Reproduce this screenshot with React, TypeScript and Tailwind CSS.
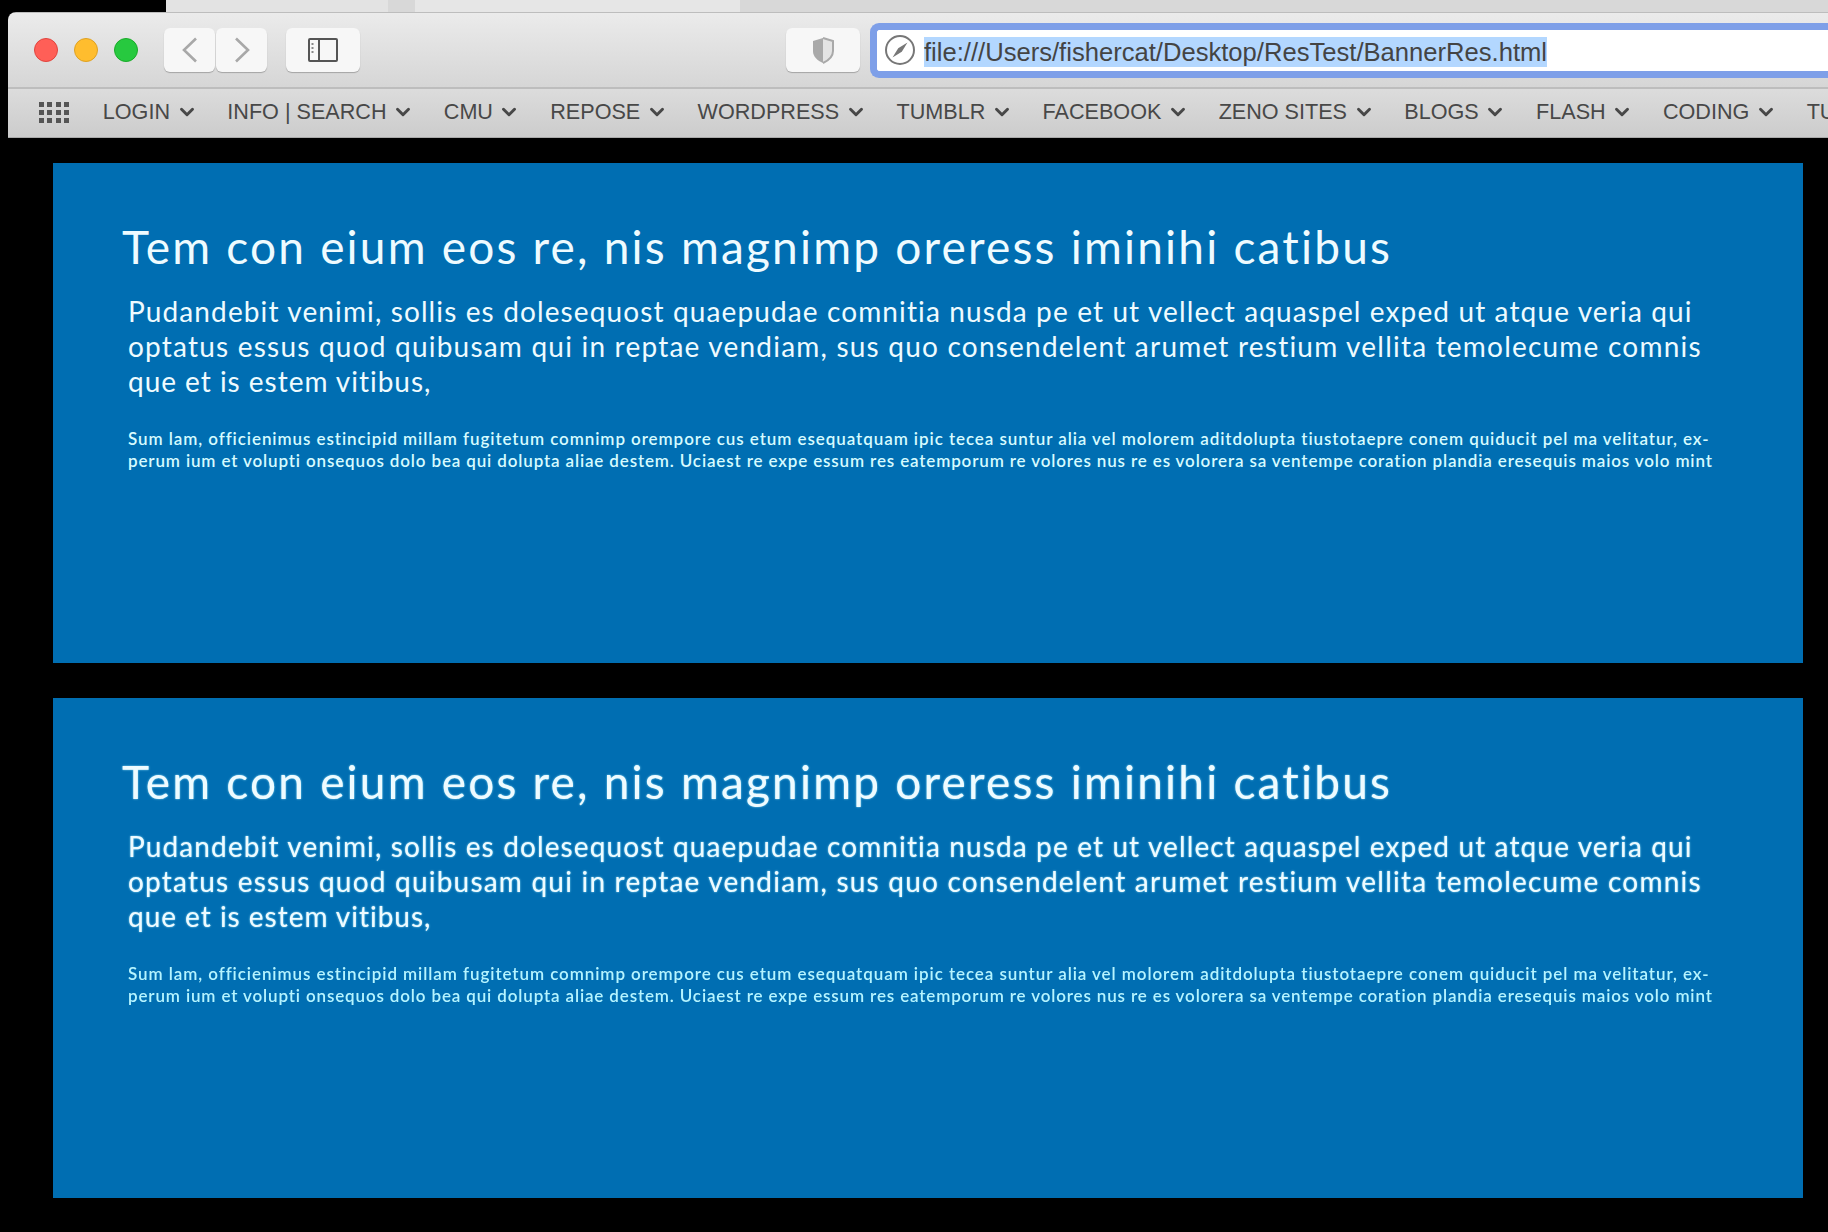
import { ChevronDown } from 'lucide-react';

const bookmarks = ['LOGIN', 'INFO | SEARCH', 'CMU', 'REPOSE', 'WORDPRESS', 'TUMBLR', 'FACEBOOK', 'ZENO SITES', 'BLOGS', 'FLASH', 'CODING'];

function Banner({ blurry }: { blurry?: boolean }) {
  const soft = blurry ? 'blur-[0.5px] [text-shadow:0_0_2px_#9fe9ff]' : '';
  return (
    <section className="h-[500px] w-[1750px] overflow-hidden bg-[#006eb2] pl-[69px] pt-[59px] font-['Lato',sans-serif] text-[#eefbff]">
      <h1 className={`whitespace-nowrap text-[46px] leading-[50px] font-normal tracking-[2.2px] ${soft}`}>Tem con eium eos re, nis magnimp oreress iminihi catibus</h1>
      <div className={`mt-[22px] ml-[6px] whitespace-nowrap text-[28px] leading-[35px] ${soft}`}>
        <p className="tracking-[1.12px]">Pudandebit venimi, sollis es dolesequost quaepudae comnitia nusda pe et ut vellect aquaspel exped ut atque veria qui</p>
        <p className="tracking-[1.21px]">optatus essus quod quibusam qui in reptae vendiam, sus quo consendelent arumet restium vellita temolecume comnis</p>
        <p className="tracking-[0.97px]">que et is estem vitibus,</p>
      </div>
      <div className={`mt-[29px] ml-[6px] whitespace-nowrap text-[17px] leading-[22px] font-semibold ${blurry ? 'blur-[0.5px] text-[#b5f4ff]' : 'text-[#d6fbff]'}`}>
        <p className="tracking-[0.925px]">Sum lam, officienimus estincipid millam fugitetum comnimp orempore cus etum esequatquam ipic tecea suntur alia vel molorem aditdolupta tiustotaepre conem quiducit pel ma velitatur, ex-</p>
        <p className="tracking-[0.855px]">perum ium et volupti onsequos dolo bea qui dolupta aliae destem. Uciaest re expe essum res eatemporum re volores nus re es volorera sa ventempe coration plandia eresequis maios volo mint</p>
      </div>
    </section>
  );
}

function ToolButton({ width, children }: { width: string; children: React.ReactNode }) {
  return <div className={`grid h-[44px] place-items-center rounded-[6px] bg-[#f7f7f7] shadow-[0_1px_1px_rgba(0,0,0,0.25)] ${width}`}>{children}</div>;
}

export default function App() {
  return (
    <div className="h-[1232px] w-[1828px] overflow-hidden bg-black font-['Liberation_Sans',sans-serif]">
      <div className="flex h-3 pl-[166px]">
        <div className="w-[222px] bg-[#e3e3e3]" />
        <div className="w-[27px] bg-[#d8d8d8]" />
        <div className="w-[325px] bg-[#e6e6e6]" />
        <div className="flex-1 bg-[#d8d8d8]" />
      </div>
      <div className="ml-2 overflow-hidden rounded-tl-[8px]">
        <div className="flex h-[75px] items-center border-t border-[#bdbdbd] bg-gradient-to-b from-[#ebebeb] to-[#d6d6d6] pl-[26px]">
          <div className="flex gap-[16px]">
            <span className="h-6 w-6 rounded-full border border-[#e0443e] bg-[#ff5f57]" />
            <span className="h-6 w-6 rounded-full border border-[#dea123] bg-[#ffbd2e]" />
            <span className="h-6 w-6 rounded-full border border-[#1aab29] bg-[#27c93f]" />
          </div>
          <div className="ml-[26px] flex gap-[1px]">
            <ToolButton width="w-[51px]">
              <svg width="16" height="26" viewBox="0 0 16 26" fill="none" stroke="#a8a8a8" strokeWidth="2.6">
                <path d="M14 1.500 2 13l12 11.500" />
              </svg>
            </ToolButton>
            <ToolButton width="w-[51px]">
              <svg width="16" height="26" viewBox="0 0 16 26" fill="none" stroke="#a8a8a8" strokeWidth="2.6">
                <path d="M2 1.500 14 13 2 24.500" />
              </svg>
            </ToolButton>
          </div>
          <div className="ml-[19px]">
            <ToolButton width="w-[74px]">
              <svg width="30" height="24" viewBox="0 0 30 24" fill="none" stroke="#555" strokeWidth="2">
                <rect x="1" y="1" width="28" height="22" rx="1" />
                <path d="M11 1v22" />
                <path d="M3.500 6h4M3.500 10h4M3.500 14h4" stroke="#888" strokeDasharray="2 2" />
              </svg>
            </ToolButton>
          </div>
          <div className="ml-[426px]">
            <ToolButton width="w-[74px]">
              <svg width="22" height="27" viewBox="0 0 22 27">
                <path d="M11 1 1 4v10c0 6 4.500 9.500 10 12z" fill="#a9a9a9" />
                <path d="M11 1l10 3v10c0 6-4.500 9.500-10 12" fill="#e4e4e4" stroke="#a9a9a9" strokeWidth="2" />
              </svg>
            </ToolButton>
          </div>
          <div className="ml-[10px] flex h-[55px] flex-1 items-center rounded-l-[9px] border-[7px] border-r-0 border-[#7e9fe8] bg-white pt-[3px] pl-[8px]">
            <svg width="30" height="30" viewBox="0 0 30 30" className="-mt-[3px]">
              <circle cx="15" cy="15" r="14" fill="none" stroke="#777" strokeWidth="2" />
              <path d="M22.500 7.500 16.800 16.800 7.500 22.500 13.200 13.200z" fill="#777" />
            </svg>
            <span className="ml-[9px] bg-[#b3d7ff] text-[25.6px] leading-[30px] text-[#444]">file:///Users/fishercat/Desktop/ResTest/BannerRes.html</span>
          </div>
        </div>
        <div className="flex h-[51px] items-center gap-[29.800px] overflow-hidden border-t-2 border-b border-t-[#bdbdbd] border-b-[#aaa] bg-gradient-to-b from-[#dcdcdc] to-[#cccccc] pb-[1px] pl-[31px] text-[21.6px] whitespace-nowrap text-[#484848]">
          <div className="mr-[4px] grid w-[30px] shrink-0 grid-cols-4 gap-x-[3.500px] gap-y-[3px]">
            {Array.from({ length: 12 }).map((_, i) => (
              <span key={i} className="h-[5px] w-[5px] bg-[#555]" />
            ))}
          </div>
          {bookmarks.map((b) => (
            <span key={b} className="flex shrink-0 items-center gap-[5.500px]">
              {b}
              <ChevronDown className="h-[22px] w-[22px]" strokeWidth={3.2} />
            </span>
          ))}
          <span className="shrink-0">TU</span>
        </div>
      </div>
      <main className="flex flex-col gap-[35px] pt-[25px] pl-[53px]">
        <Banner />
        <Banner blurry />
      </main>
    </div>
  );
}
